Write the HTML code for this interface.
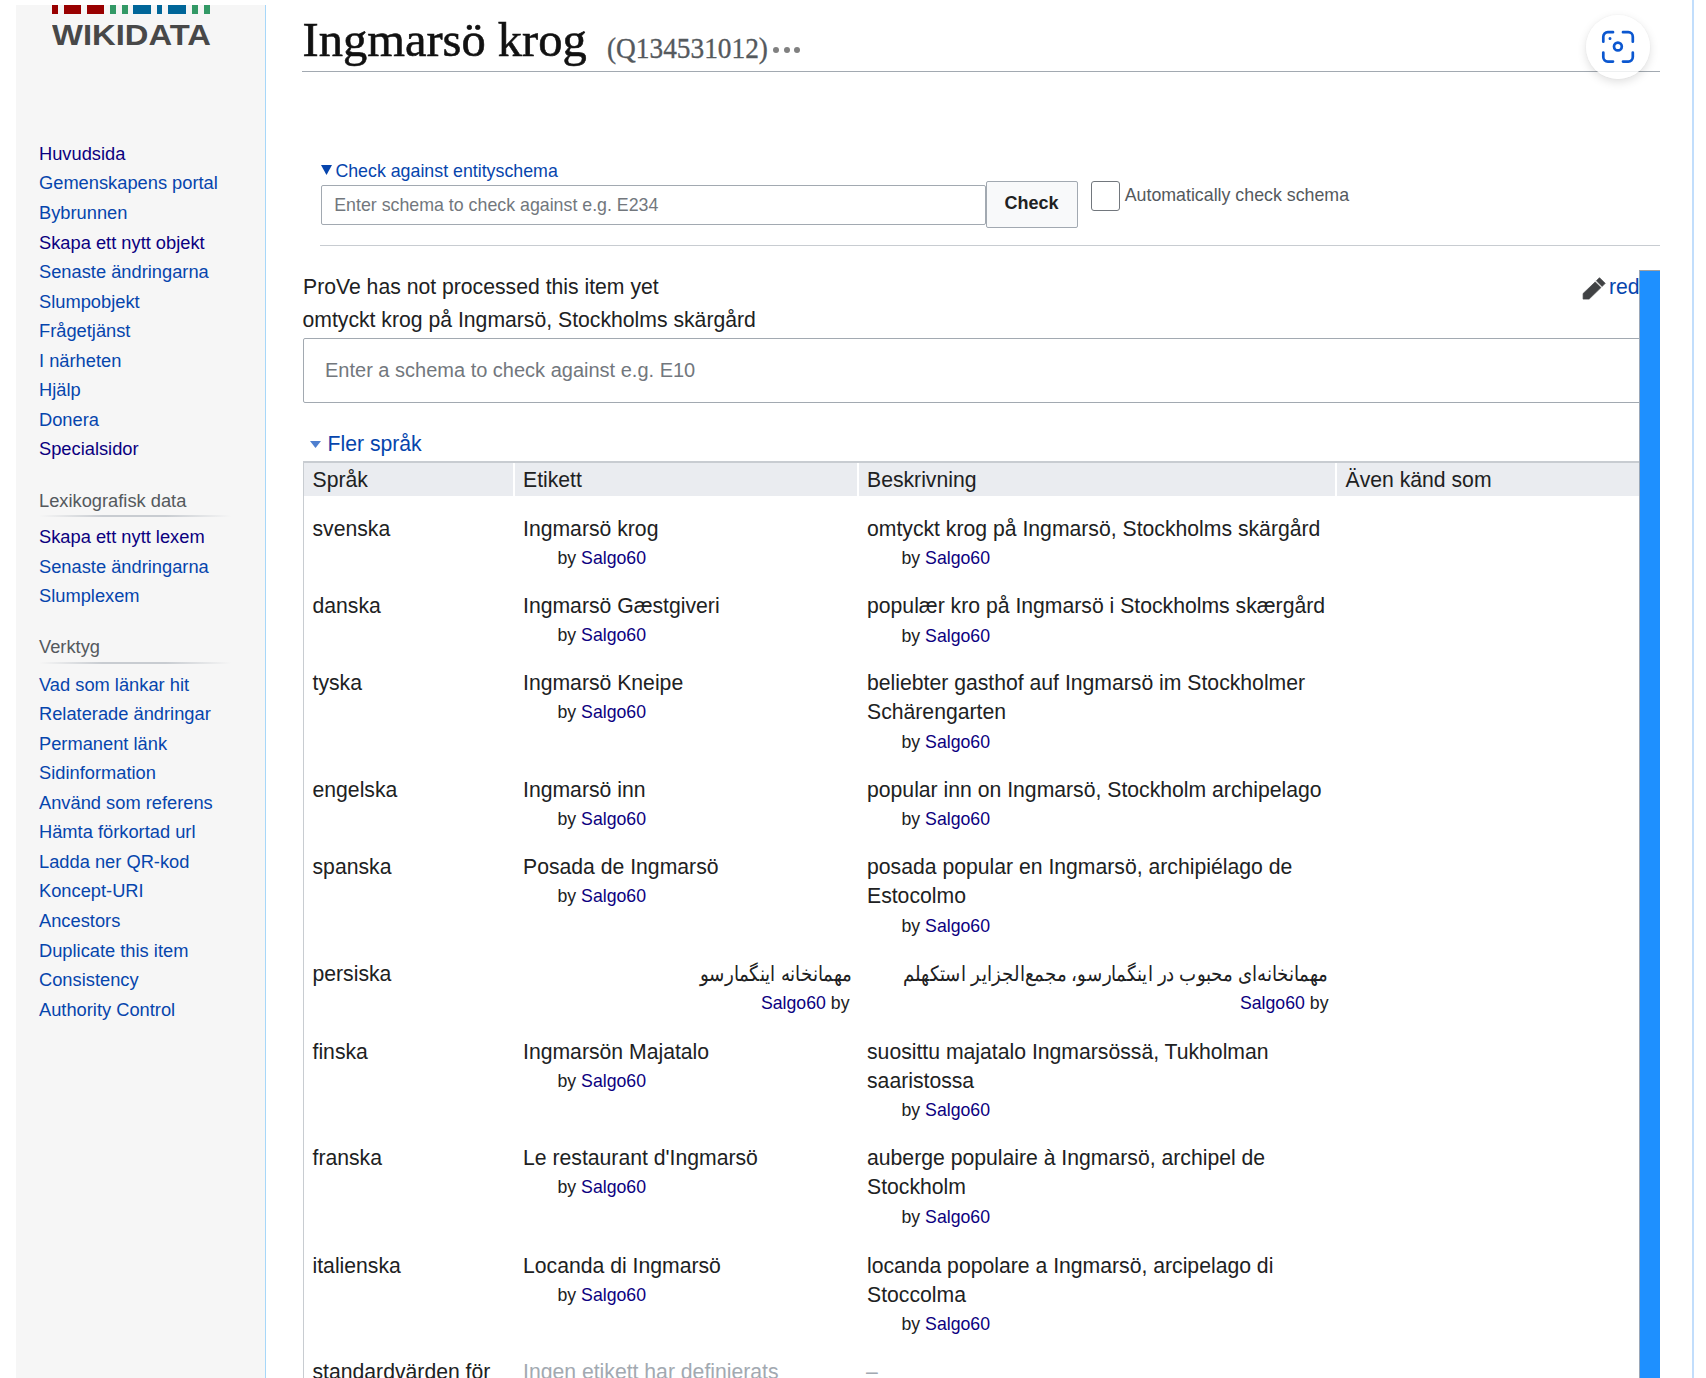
<!DOCTYPE html>
<html><head><meta charset="utf-8"><title>Ingmarsö krog</title>
<style>html,body{margin:0;padding:0;background:#fff;width:1706px;height:1378px;overflow:hidden;position:relative}</style>
</head><body>
<div style="position:absolute;left:16.00px;top:5.00px;width:249.00px;height:1373.00px;background:#f6f6f6"></div>
<div style="position:absolute;left:265.00px;top:5.00px;width:1.20px;height:1373.00px;background:#a7d7f9"></div>
<div style="position:absolute;left:52.00px;top:5.00px;width:5.80px;height:9.40px;background:#990000"></div>
<div style="position:absolute;left:64.00px;top:5.00px;width:17.00px;height:9.40px;background:#990000"></div>
<div style="position:absolute;left:86.70px;top:5.00px;width:17.30px;height:9.40px;background:#990000"></div>
<div style="position:absolute;left:110.00px;top:5.00px;width:6.00px;height:9.40px;background:#339966"></div>
<div style="position:absolute;left:122.00px;top:5.00px;width:5.50px;height:9.40px;background:#339966"></div>
<div style="position:absolute;left:133.00px;top:5.00px;width:17.50px;height:9.40px;background:#006699"></div>
<div style="position:absolute;left:156.80px;top:5.00px;width:5.70px;height:9.40px;background:#006699"></div>
<div style="position:absolute;left:168.00px;top:5.00px;width:17.70px;height:9.40px;background:#006699"></div>
<div style="position:absolute;left:192.00px;top:5.00px;width:6.00px;height:9.40px;background:#339966"></div>
<div style="position:absolute;left:204.00px;top:5.00px;width:5.70px;height:9.40px;background:#339966"></div>
<div style="position:absolute;left:52px;top:20px;width:158px;height:30px;overflow:visible"><div style="position:absolute;left:0;top:0;font:bold 29px/30px 'Liberation Sans', sans-serif;color:#484848;transform-origin:0 0;transform:scaleX(1.13);letter-spacing:0">WIKIDATA</div></div>
<div style="position:absolute;left:39.00px;top:144.94px;font:normal 18.3px/18.3px 'Liberation Sans', sans-serif;color:#0b0080;white-space:nowrap;">Huvudsida</div>
<div style="position:absolute;left:39.00px;top:174.47px;font:normal 18.3px/18.3px 'Liberation Sans', sans-serif;color:#0645ad;white-space:nowrap;">Gemenskapens portal</div>
<div style="position:absolute;left:39.00px;top:203.98px;font:normal 18.3px/18.3px 'Liberation Sans', sans-serif;color:#0645ad;white-space:nowrap;">Bybrunnen</div>
<div style="position:absolute;left:39.00px;top:233.50px;font:normal 18.3px/18.3px 'Liberation Sans', sans-serif;color:#0b0080;white-space:nowrap;">Skapa ett nytt objekt</div>
<div style="position:absolute;left:39.00px;top:263.02px;font:normal 18.3px/18.3px 'Liberation Sans', sans-serif;color:#0645ad;white-space:nowrap;">Senaste ändringarna</div>
<div style="position:absolute;left:39.00px;top:292.55px;font:normal 18.3px/18.3px 'Liberation Sans', sans-serif;color:#0645ad;white-space:nowrap;">Slumpobjekt</div>
<div style="position:absolute;left:39.00px;top:322.06px;font:normal 18.3px/18.3px 'Liberation Sans', sans-serif;color:#0645ad;white-space:nowrap;">Frågetjänst</div>
<div style="position:absolute;left:39.00px;top:351.58px;font:normal 18.3px/18.3px 'Liberation Sans', sans-serif;color:#0645ad;white-space:nowrap;">I närheten</div>
<div style="position:absolute;left:39.00px;top:381.10px;font:normal 18.3px/18.3px 'Liberation Sans', sans-serif;color:#0645ad;white-space:nowrap;">Hjälp</div>
<div style="position:absolute;left:39.00px;top:410.62px;font:normal 18.3px/18.3px 'Liberation Sans', sans-serif;color:#0645ad;white-space:nowrap;">Donera</div>
<div style="position:absolute;left:39.00px;top:440.14px;font:normal 18.3px/18.3px 'Liberation Sans', sans-serif;color:#0b0080;white-space:nowrap;">Specialsidor</div>
<div style="position:absolute;left:39.00px;top:491.55px;font:normal 18.3px/18.3px 'Liberation Sans', sans-serif;color:#54595d;white-space:nowrap;">Lexikografisk data</div>
<div style="position:absolute;left:39px;top:515px;width:192px;height:1.5px;background:linear-gradient(to right,rgba(200,204,209,0) 0,#c8ccd1 33%,#c8ccd1 66%,rgba(200,204,209,0) 100%)"></div>
<div style="position:absolute;left:39.00px;top:527.85px;font:normal 18.3px/18.3px 'Liberation Sans', sans-serif;color:#0b0080;white-space:nowrap;">Skapa ett nytt lexem</div>
<div style="position:absolute;left:39.00px;top:557.64px;font:normal 18.3px/18.3px 'Liberation Sans', sans-serif;color:#0645ad;white-space:nowrap;">Senaste ändringarna</div>
<div style="position:absolute;left:39.00px;top:587.45px;font:normal 18.3px/18.3px 'Liberation Sans', sans-serif;color:#0645ad;white-space:nowrap;">Slumplexem</div>
<div style="position:absolute;left:39.00px;top:638.45px;font:normal 18.3px/18.3px 'Liberation Sans', sans-serif;color:#54595d;white-space:nowrap;">Verktyg</div>
<div style="position:absolute;left:39px;top:662px;width:192px;height:1.5px;background:linear-gradient(to right,rgba(200,204,209,0) 0,#c8ccd1 33%,#c8ccd1 66%,rgba(200,204,209,0) 100%)"></div>
<div style="position:absolute;left:39.00px;top:675.55px;font:normal 18.3px/18.3px 'Liberation Sans', sans-serif;color:#0645ad;white-space:nowrap;">Vad som länkar hit</div>
<div style="position:absolute;left:39.00px;top:705.10px;font:normal 18.3px/18.3px 'Liberation Sans', sans-serif;color:#0645ad;white-space:nowrap;">Relaterade ändringar</div>
<div style="position:absolute;left:39.00px;top:734.65px;font:normal 18.3px/18.3px 'Liberation Sans', sans-serif;color:#0645ad;white-space:nowrap;">Permanent länk</div>
<div style="position:absolute;left:39.00px;top:764.20px;font:normal 18.3px/18.3px 'Liberation Sans', sans-serif;color:#0645ad;white-space:nowrap;">Sidinformation</div>
<div style="position:absolute;left:39.00px;top:793.75px;font:normal 18.3px/18.3px 'Liberation Sans', sans-serif;color:#0645ad;white-space:nowrap;">Använd som referens</div>
<div style="position:absolute;left:39.00px;top:823.30px;font:normal 18.3px/18.3px 'Liberation Sans', sans-serif;color:#0645ad;white-space:nowrap;">Hämta förkortad url</div>
<div style="position:absolute;left:39.00px;top:852.85px;font:normal 18.3px/18.3px 'Liberation Sans', sans-serif;color:#0645ad;white-space:nowrap;">Ladda ner QR-kod</div>
<div style="position:absolute;left:39.00px;top:882.40px;font:normal 18.3px/18.3px 'Liberation Sans', sans-serif;color:#0645ad;white-space:nowrap;">Koncept-URI</div>
<div style="position:absolute;left:39.00px;top:911.95px;font:normal 18.3px/18.3px 'Liberation Sans', sans-serif;color:#0645ad;white-space:nowrap;">Ancestors</div>
<div style="position:absolute;left:39.00px;top:941.50px;font:normal 18.3px/18.3px 'Liberation Sans', sans-serif;color:#0645ad;white-space:nowrap;">Duplicate this item</div>
<div style="position:absolute;left:39.00px;top:971.05px;font:normal 18.3px/18.3px 'Liberation Sans', sans-serif;color:#0645ad;white-space:nowrap;">Consistency</div>
<div style="position:absolute;left:39.00px;top:1000.60px;font:normal 18.3px/18.3px 'Liberation Sans', sans-serif;color:#0645ad;white-space:nowrap;">Authority Control</div>
<div style="position:absolute;left:1692.30px;top:0.00px;width:1.50px;height:1378.00px;background:#c2defc"></div>
<div style="position:absolute;left:302.50px;top:15.75px;font:normal 48.5px/48.5px 'Liberation Serif', serif;color:#111;white-space:nowrap;-webkit-text-stroke:0.6px #111">Ingmarsö krog</div>
<div style="position:absolute;left:607px;top:33.10px;font:30px/30px 'Liberation Serif', serif;color:#54595d;white-space:nowrap;transform-origin:0 0;transform:scaleX(0.911);-webkit-text-stroke:0.35px #54595d">(Q134531012)</div>
<div style="position:absolute;left:772.80px;top:47.00px;width:6.00px;height:6.00px;background:#808080;border-radius:50%"></div>
<div style="position:absolute;left:783.50px;top:47.00px;width:6.00px;height:6.00px;background:#808080;border-radius:50%"></div>
<div style="position:absolute;left:794.00px;top:47.00px;width:6.00px;height:6.00px;background:#808080;border-radius:50%"></div>
<div style="position:absolute;left:302.30px;top:70.70px;width:1357.70px;height:1.50px;background:#a2a9b1"></div>
<div style="position:absolute;left:1586px;top:15px;width:64px;height:64px;border-radius:50%;background:rgba(255,255,255,0.82);box-shadow:0 3px 10px rgba(0,0,0,0.13),0 0 2px rgba(0,0,0,0.05)"></div>
<svg style="position:absolute;left:1600px;top:29px" width="36" height="36" viewBox="0 0 36 36" fill="none" stroke="#0b57d0" stroke-width="2.7" stroke-linecap="round">
<path d="M13 3.2H7.8A4.5 4.5 0 0 0 3.3 7.7V12.7"/><path d="M23 3.2H28.3A4.5 4.5 0 0 1 32.8 7.7V12.7"/>
<path d="M3.3 23.5V28.1A4.5 4.5 0 0 0 7.8 32.6H13"/><path d="M32.8 23.5V28.1A4.5 4.5 0 0 1 28.3 32.6H23"/>
<circle cx="17.9" cy="17.5" r="3.9"/><circle cx="10" cy="9.6" r="0.9" fill="#0b57d0" stroke-width="1.2"/></svg>
<svg style="position:absolute;left:320.5px;top:165px" width="11" height="10" viewBox="0 0 11 10"><path d="M0 0H11L5.5 10Z" fill="#0645ad"/></svg>
<div style="position:absolute;left:335.40px;top:162.87px;font:normal 17.8px/17.8px 'Liberation Sans', sans-serif;color:#0645ad;white-space:nowrap;">Check against entityschema</div>
<div style="position:absolute;left:320.8px;top:184.8px;width:665px;height:39.8px;box-sizing:border-box;border:1.5px solid #a2a9b1;border-radius:2px;background:#fff"></div>
<div style="position:absolute;left:334.20px;top:197.27px;font:normal 17.8px/17.8px 'Liberation Sans', sans-serif;color:#72777d;white-space:nowrap;">Enter schema to check against e.g. E234</div>
<div style="position:absolute;left:985.8px;top:181.2px;width:91.8px;height:47.1px;box-sizing:border-box;border:1.5px solid #a2a9b1;border-radius:2px;background:#f8f9fa"></div>
<div style="position:absolute;left:1004.50px;top:193.80px;font:bold 18px/18px 'Liberation Sans', sans-serif;color:#202122;white-space:nowrap;">Check</div>
<div style="position:absolute;left:1090.6px;top:181.2px;width:29.5px;height:29.5px;box-sizing:border-box;border:1.5px solid #72777d;border-radius:3px;background:#fff"></div>
<div style="position:absolute;left:1124.70px;top:186.87px;font:normal 17.8px/17.8px 'Liberation Sans', sans-serif;color:#54595d;white-space:nowrap;">Automatically check schema</div>
<div style="position:absolute;left:320.00px;top:244.50px;width:1340.00px;height:1.50px;background:#c8ccd1"></div>
<div style="position:absolute;left:0;top:0;width:1660px;height:1378px;overflow:hidden">
<div style="position:absolute;left:303.00px;top:275.88px;font:normal 21.2px/21.2px 'Liberation Sans', sans-serif;color:#202122;white-space:nowrap;">ProVe has not processed this item yet</div>
<svg style="position:absolute;left:1580px;top:274px" width="30" height="30" viewBox="0 0 30 30"><g fill="#404244" stroke="#404244" stroke-width="0.7" stroke-linejoin="round"><path d="M15.24 7.89L20.96 13.61L9.1 25.1H3.1V19.5Z"/><path d="M16.37 6.76L22.09 12.48L25.2 9.37L19.48 3.65Z"/></g></svg>
<div style="position:absolute;left:1609.00px;top:275.88px;font:normal 21.2px/21.2px 'Liberation Sans', sans-serif;color:#0645ad;white-space:nowrap;">redigera</div>
<div style="position:absolute;left:302.50px;top:309.28px;font:normal 21.2px/21.2px 'Liberation Sans', sans-serif;color:#202122;white-space:nowrap;">omtyckt krog på Ingmarsö, Stockholms skärgård</div>
<div style="position:absolute;left:302.6px;top:338.3px;width:1380px;height:65.2px;box-sizing:border-box;border:1.5px solid #a2a9b1;border-radius:2px;background:#fff"></div>
<div style="position:absolute;left:325.00px;top:359.60px;font:normal 20px/20px 'Liberation Sans', sans-serif;color:#72777d;white-space:nowrap;">Enter a schema to check against e.g. E10</div>
<svg style="position:absolute;left:309.9px;top:441px" width="11" height="7" viewBox="0 0 11 7"><path d="M0 0H11L5.5 7Z" fill="#4f7fcf"/></svg>
<div style="position:absolute;left:327.50px;top:432.78px;font:normal 21.2px/21.2px 'Liberation Sans', sans-serif;color:#0645ad;white-space:nowrap;">Fler språk</div>
<div style="position:absolute;left:302.60px;top:461.10px;width:1397.40px;height:1.70px;background:#c8ccd1"></div>
<div style="position:absolute;left:302.60px;top:461.10px;width:1.50px;height:916.90px;background:#c8ccd1"></div>
<div style="position:absolute;left:304.10px;top:462.80px;width:208.90px;height:32.90px;background:#eaecf0"></div>
<div style="position:absolute;left:514.50px;top:462.80px;width:342.50px;height:32.90px;background:#eaecf0"></div>
<div style="position:absolute;left:858.50px;top:462.80px;width:476.50px;height:32.90px;background:#eaecf0"></div>
<div style="position:absolute;left:1336.50px;top:462.80px;width:363.50px;height:32.90px;background:#eaecf0"></div>
<div style="position:absolute;left:312.50px;top:468.98px;font:normal 21.2px/21.2px 'Liberation Sans', sans-serif;color:#202122;white-space:nowrap;">Språk</div>
<div style="position:absolute;left:523.00px;top:468.98px;font:normal 21.2px/21.2px 'Liberation Sans', sans-serif;color:#202122;white-space:nowrap;">Etikett</div>
<div style="position:absolute;left:867.00px;top:468.98px;font:normal 21.2px/21.2px 'Liberation Sans', sans-serif;color:#202122;white-space:nowrap;">Beskrivning</div>
<div style="position:absolute;left:1345.50px;top:468.98px;font:normal 21.2px/21.2px 'Liberation Sans', sans-serif;color:#202122;white-space:nowrap;">Även känd som</div>
<div style="position:absolute;left:312.50px;top:517.68px;font:normal 21.2px/21.2px 'Liberation Sans', sans-serif;color:#202122;white-space:nowrap;">svenska</div>
<div style="position:absolute;left:523.00px;top:517.68px;font:normal 21.2px/21.2px 'Liberation Sans', sans-serif;color:#202122;white-space:nowrap;">Ingmarsö krog</div>
<div style="position:absolute;left:557.50px;top:549.66px;font:normal 17.7px/17.7px 'Liberation Sans', sans-serif;color:#202122;white-space:nowrap;">by <span style="color:#0b0080">Salgo60</span></div>
<div style="position:absolute;left:867.00px;top:517.68px;font:normal 21.2px/21.2px 'Liberation Sans', sans-serif;color:#202122;white-space:nowrap;">omtyckt krog på Ingmarsö, Stockholms skärgård</div>
<div style="position:absolute;left:901.50px;top:549.86px;font:normal 17.7px/17.7px 'Liberation Sans', sans-serif;color:#202122;white-space:nowrap;">by <span style="color:#0b0080">Salgo60</span></div>
<div style="position:absolute;left:312.50px;top:595.48px;font:normal 21.2px/21.2px 'Liberation Sans', sans-serif;color:#202122;white-space:nowrap;">danska</div>
<div style="position:absolute;left:523.00px;top:595.48px;font:normal 21.2px/21.2px 'Liberation Sans', sans-serif;color:#202122;white-space:nowrap;">Ingmarsö Gæstgiveri</div>
<div style="position:absolute;left:557.50px;top:627.46px;font:normal 17.7px/17.7px 'Liberation Sans', sans-serif;color:#202122;white-space:nowrap;">by <span style="color:#0b0080">Salgo60</span></div>
<div style="position:absolute;left:867.00px;top:595.48px;font:normal 21.2px/21.2px 'Liberation Sans', sans-serif;color:#202122;white-space:nowrap;">populær kro på Ingmarsö i Stockholms skærgård</div>
<div style="position:absolute;left:901.50px;top:627.66px;font:normal 17.7px/17.7px 'Liberation Sans', sans-serif;color:#202122;white-space:nowrap;">by <span style="color:#0b0080">Salgo60</span></div>
<div style="position:absolute;left:312.50px;top:672.18px;font:normal 21.2px/21.2px 'Liberation Sans', sans-serif;color:#202122;white-space:nowrap;">tyska</div>
<div style="position:absolute;left:523.00px;top:672.18px;font:normal 21.2px/21.2px 'Liberation Sans', sans-serif;color:#202122;white-space:nowrap;">Ingmarsö Kneipe</div>
<div style="position:absolute;left:557.50px;top:704.16px;font:normal 17.7px/17.7px 'Liberation Sans', sans-serif;color:#202122;white-space:nowrap;">by <span style="color:#0b0080">Salgo60</span></div>
<div style="position:absolute;left:867.00px;top:672.18px;font:normal 21.2px/21.2px 'Liberation Sans', sans-serif;color:#202122;white-space:nowrap;">beliebter gasthof auf Ingmarsö im Stockholmer</div>
<div style="position:absolute;left:867.00px;top:701.38px;font:normal 21.2px/21.2px 'Liberation Sans', sans-serif;color:#202122;white-space:nowrap;">Schärengarten</div>
<div style="position:absolute;left:901.50px;top:733.56px;font:normal 17.7px/17.7px 'Liberation Sans', sans-serif;color:#202122;white-space:nowrap;">by <span style="color:#0b0080">Salgo60</span></div>
<div style="position:absolute;left:312.50px;top:778.78px;font:normal 21.2px/21.2px 'Liberation Sans', sans-serif;color:#202122;white-space:nowrap;">engelska</div>
<div style="position:absolute;left:523.00px;top:778.78px;font:normal 21.2px/21.2px 'Liberation Sans', sans-serif;color:#202122;white-space:nowrap;">Ingmarsö inn</div>
<div style="position:absolute;left:557.50px;top:810.75px;font:normal 17.7px/17.7px 'Liberation Sans', sans-serif;color:#202122;white-space:nowrap;">by <span style="color:#0b0080">Salgo60</span></div>
<div style="position:absolute;left:867.00px;top:778.78px;font:normal 21.2px/21.2px 'Liberation Sans', sans-serif;color:#202122;white-space:nowrap;">popular inn on Ingmarsö, Stockholm archipelago</div>
<div style="position:absolute;left:901.50px;top:810.96px;font:normal 17.7px/17.7px 'Liberation Sans', sans-serif;color:#202122;white-space:nowrap;">by <span style="color:#0b0080">Salgo60</span></div>
<div style="position:absolute;left:312.50px;top:856.18px;font:normal 21.2px/21.2px 'Liberation Sans', sans-serif;color:#202122;white-space:nowrap;">spanska</div>
<div style="position:absolute;left:523.00px;top:856.18px;font:normal 21.2px/21.2px 'Liberation Sans', sans-serif;color:#202122;white-space:nowrap;">Posada de Ingmarsö</div>
<div style="position:absolute;left:557.50px;top:888.16px;font:normal 17.7px/17.7px 'Liberation Sans', sans-serif;color:#202122;white-space:nowrap;">by <span style="color:#0b0080">Salgo60</span></div>
<div style="position:absolute;left:867.00px;top:856.18px;font:normal 21.2px/21.2px 'Liberation Sans', sans-serif;color:#202122;white-space:nowrap;">posada popular en Ingmarsö, archipiélago de</div>
<div style="position:absolute;left:867.00px;top:885.38px;font:normal 21.2px/21.2px 'Liberation Sans', sans-serif;color:#202122;white-space:nowrap;">Estocolmo</div>
<div style="position:absolute;left:901.50px;top:917.56px;font:normal 17.7px/17.7px 'Liberation Sans', sans-serif;color:#202122;white-space:nowrap;">by <span style="color:#0b0080">Salgo60</span></div>
<div style="position:absolute;left:312.50px;top:962.88px;font:normal 21.2px/21.2px 'Liberation Sans', sans-serif;color:#202122;white-space:nowrap;">persiska</div>
<div style="position:absolute;left:251.50px;width:600px;text-align:right;top:962.88px;font:normal 21.2px/21.2px 'Liberation Sans', sans-serif;color:#202122;white-space:nowrap;direction:rtl;transform-origin:100% 50%;transform:scaleX(0.87)">مهمانخانه اینگمارسو</div>
<div style="position:absolute;left:249.50px;width:600px;text-align:right;top:994.86px;font:normal 17.7px/17.7px 'Liberation Sans', sans-serif;color:#202122;white-space:nowrap;"><span style="color:#0b0080">Salgo60</span> by</div>
<div style="position:absolute;left:728.00px;width:600px;text-align:right;top:962.88px;font:normal 21.2px/21.2px 'Liberation Sans', sans-serif;color:#202122;white-space:nowrap;direction:rtl;transform-origin:100% 50%;transform:scaleX(0.865)">مهمانخانه‌ای محبوب در اینگمارسو، مجمع‌الجزایر استکهلم</div>
<div style="position:absolute;left:728.50px;width:600px;text-align:right;top:994.86px;font:normal 17.7px/17.7px 'Liberation Sans', sans-serif;color:#202122;white-space:nowrap;"><span style="color:#0b0080">Salgo60</span> by</div>
<div style="position:absolute;left:312.50px;top:1040.98px;font:normal 21.2px/21.2px 'Liberation Sans', sans-serif;color:#202122;white-space:nowrap;">finska</div>
<div style="position:absolute;left:523.00px;top:1040.98px;font:normal 21.2px/21.2px 'Liberation Sans', sans-serif;color:#202122;white-space:nowrap;">Ingmarsön Majatalo</div>
<div style="position:absolute;left:557.50px;top:1072.95px;font:normal 17.7px/17.7px 'Liberation Sans', sans-serif;color:#202122;white-space:nowrap;">by <span style="color:#0b0080">Salgo60</span></div>
<div style="position:absolute;left:867.00px;top:1040.98px;font:normal 21.2px/21.2px 'Liberation Sans', sans-serif;color:#202122;white-space:nowrap;">suosittu majatalo Ingmarsössä, Tukholman</div>
<div style="position:absolute;left:867.00px;top:1070.18px;font:normal 21.2px/21.2px 'Liberation Sans', sans-serif;color:#202122;white-space:nowrap;">saaristossa</div>
<div style="position:absolute;left:901.50px;top:1102.36px;font:normal 17.7px/17.7px 'Liberation Sans', sans-serif;color:#202122;white-space:nowrap;">by <span style="color:#0b0080">Salgo60</span></div>
<div style="position:absolute;left:312.50px;top:1147.18px;font:normal 21.2px/21.2px 'Liberation Sans', sans-serif;color:#202122;white-space:nowrap;">franska</div>
<div style="position:absolute;left:523.00px;top:1147.18px;font:normal 21.2px/21.2px 'Liberation Sans', sans-serif;color:#202122;white-space:nowrap;">Le restaurant d&#x27;Ingmarsö</div>
<div style="position:absolute;left:557.50px;top:1179.15px;font:normal 17.7px/17.7px 'Liberation Sans', sans-serif;color:#202122;white-space:nowrap;">by <span style="color:#0b0080">Salgo60</span></div>
<div style="position:absolute;left:867.00px;top:1147.18px;font:normal 21.2px/21.2px 'Liberation Sans', sans-serif;color:#202122;white-space:nowrap;">auberge populaire à Ingmarsö, archipel de</div>
<div style="position:absolute;left:867.00px;top:1176.38px;font:normal 21.2px/21.2px 'Liberation Sans', sans-serif;color:#202122;white-space:nowrap;">Stockholm</div>
<div style="position:absolute;left:901.50px;top:1208.56px;font:normal 17.7px/17.7px 'Liberation Sans', sans-serif;color:#202122;white-space:nowrap;">by <span style="color:#0b0080">Salgo60</span></div>
<div style="position:absolute;left:312.50px;top:1254.58px;font:normal 21.2px/21.2px 'Liberation Sans', sans-serif;color:#202122;white-space:nowrap;">italienska</div>
<div style="position:absolute;left:523.00px;top:1254.58px;font:normal 21.2px/21.2px 'Liberation Sans', sans-serif;color:#202122;white-space:nowrap;">Locanda di Ingmarsö</div>
<div style="position:absolute;left:557.50px;top:1286.55px;font:normal 17.7px/17.7px 'Liberation Sans', sans-serif;color:#202122;white-space:nowrap;">by <span style="color:#0b0080">Salgo60</span></div>
<div style="position:absolute;left:867.00px;top:1254.58px;font:normal 21.2px/21.2px 'Liberation Sans', sans-serif;color:#202122;white-space:nowrap;">locanda popolare a Ingmarsö, arcipelago di</div>
<div style="position:absolute;left:867.00px;top:1283.78px;font:normal 21.2px/21.2px 'Liberation Sans', sans-serif;color:#202122;white-space:nowrap;">Stoccolma</div>
<div style="position:absolute;left:901.50px;top:1315.95px;font:normal 17.7px/17.7px 'Liberation Sans', sans-serif;color:#202122;white-space:nowrap;">by <span style="color:#0b0080">Salgo60</span></div>
<div style="position:absolute;left:312.50px;top:1360.98px;font:normal 21.2px/21.2px 'Liberation Sans', sans-serif;color:#202122;white-space:nowrap;">standardvärden för</div>
<div style="position:absolute;left:523.00px;top:1360.98px;font:normal 21.2px/21.2px 'Liberation Sans', sans-serif;color:#a2a9b1;white-space:nowrap;">Ingen etikett har definierats</div>
<div style="position:absolute;left:866.00px;top:1360.98px;font:normal 21.2px/21.2px 'Liberation Sans', sans-serif;color:#a2a9b1;white-space:nowrap;">–</div>
</div>
<div style="position:absolute;left:1639.2px;top:269.5px;width:20.5px;height:1200px;box-sizing:border-box;background:#1e90ff;border-top:1.3px solid #a0a0a0;border-left:1px solid #9aa7b8"></div>
</body></html>
